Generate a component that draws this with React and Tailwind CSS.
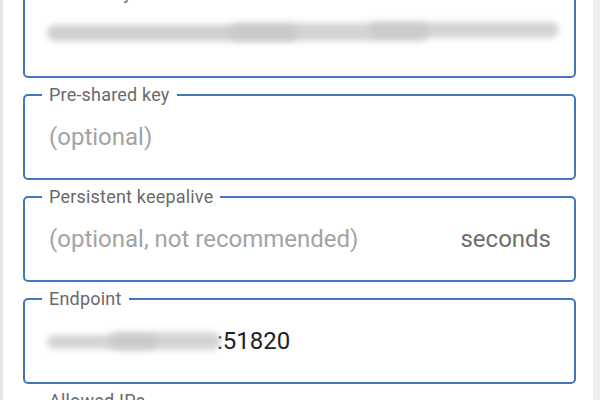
import React from "react";

function Field({ label, children }) {
  return (
    <div className="relative h-[86px] shrink-0 rounded-[5px] border-2 border-[#4277bf] flex items-start pt-[27px] pl-[24px] pr-[24px]">
      <span className="absolute left-[17px] top-[-12px] bg-white px-[7px] text-[18px] leading-[21px] tracking-[0.2px] text-[#6a6a6a]">
        {label}
      </span>
      {children}
    </div>
  );
}

function Blur({ className }) {
  return <div className={"rounded-full bg-[#c9c9c9] blur-[3px] " + className} />;
}

export default function App() {
  return (
    <div
      className="w-[600px] h-[400px] overflow-hidden bg-white flex"
      style={{ fontFamily: "Roboto, 'Noto Sans', sans-serif" }}
    >
      <div className="w-[3px] h-full bg-[#e6e6e6] shrink-0" />
      <div className="flex-1 pl-[20px] pr-[17px] mt-[-8px] flex flex-col gap-[16px]">
        <Field label="Public key">
          <div className="relative w-full h-[28px]">
            <Blur className="absolute left-[-2px] top-[4px] w-[250px] h-[16px] opacity-90" />
            <Blur className="absolute left-[180px] top-[2px] w-[200px] h-[18px] opacity-80" />
            <Blur className="absolute left-[320px] top-[1px] w-[190px] h-[16px] opacity-80" />
          </div>
        </Field>
        <Field label="Pre-shared key">
          <span className="text-[24px] leading-[28px] text-[#a3a3a3]">(optional)</span>
        </Field>
        <Field label="Persistent keepalive">
          <span className="flex-1 text-[24px] leading-[28px] text-[#a3a3a3]">
            (optional, not recommended)
          </span>
          <span className="text-[24px] leading-[28px] text-[#6e6e6e] mr-[-1px]">seconds</span>
        </Field>
        <Field label="Endpoint">
          <div className="relative w-[170px] h-[28px] mr-[-2px]">
            <Blur className="absolute left-[-2px] top-[8px] w-[110px] h-[14px] opacity-80" />
            <Blur className="absolute left-[60px] top-[5px] w-[112px] h-[18px] opacity-80" />
          </div>
          <span className="text-[24px] leading-[28px] text-[#222222]">:51820</span>
        </Field>
        <Field label="Allowed IPs">
          <span />
        </Field>
      </div>
      <div className="w-[7px] h-full bg-[#eeeeee] shrink-0" />
    </div>
  );
}
